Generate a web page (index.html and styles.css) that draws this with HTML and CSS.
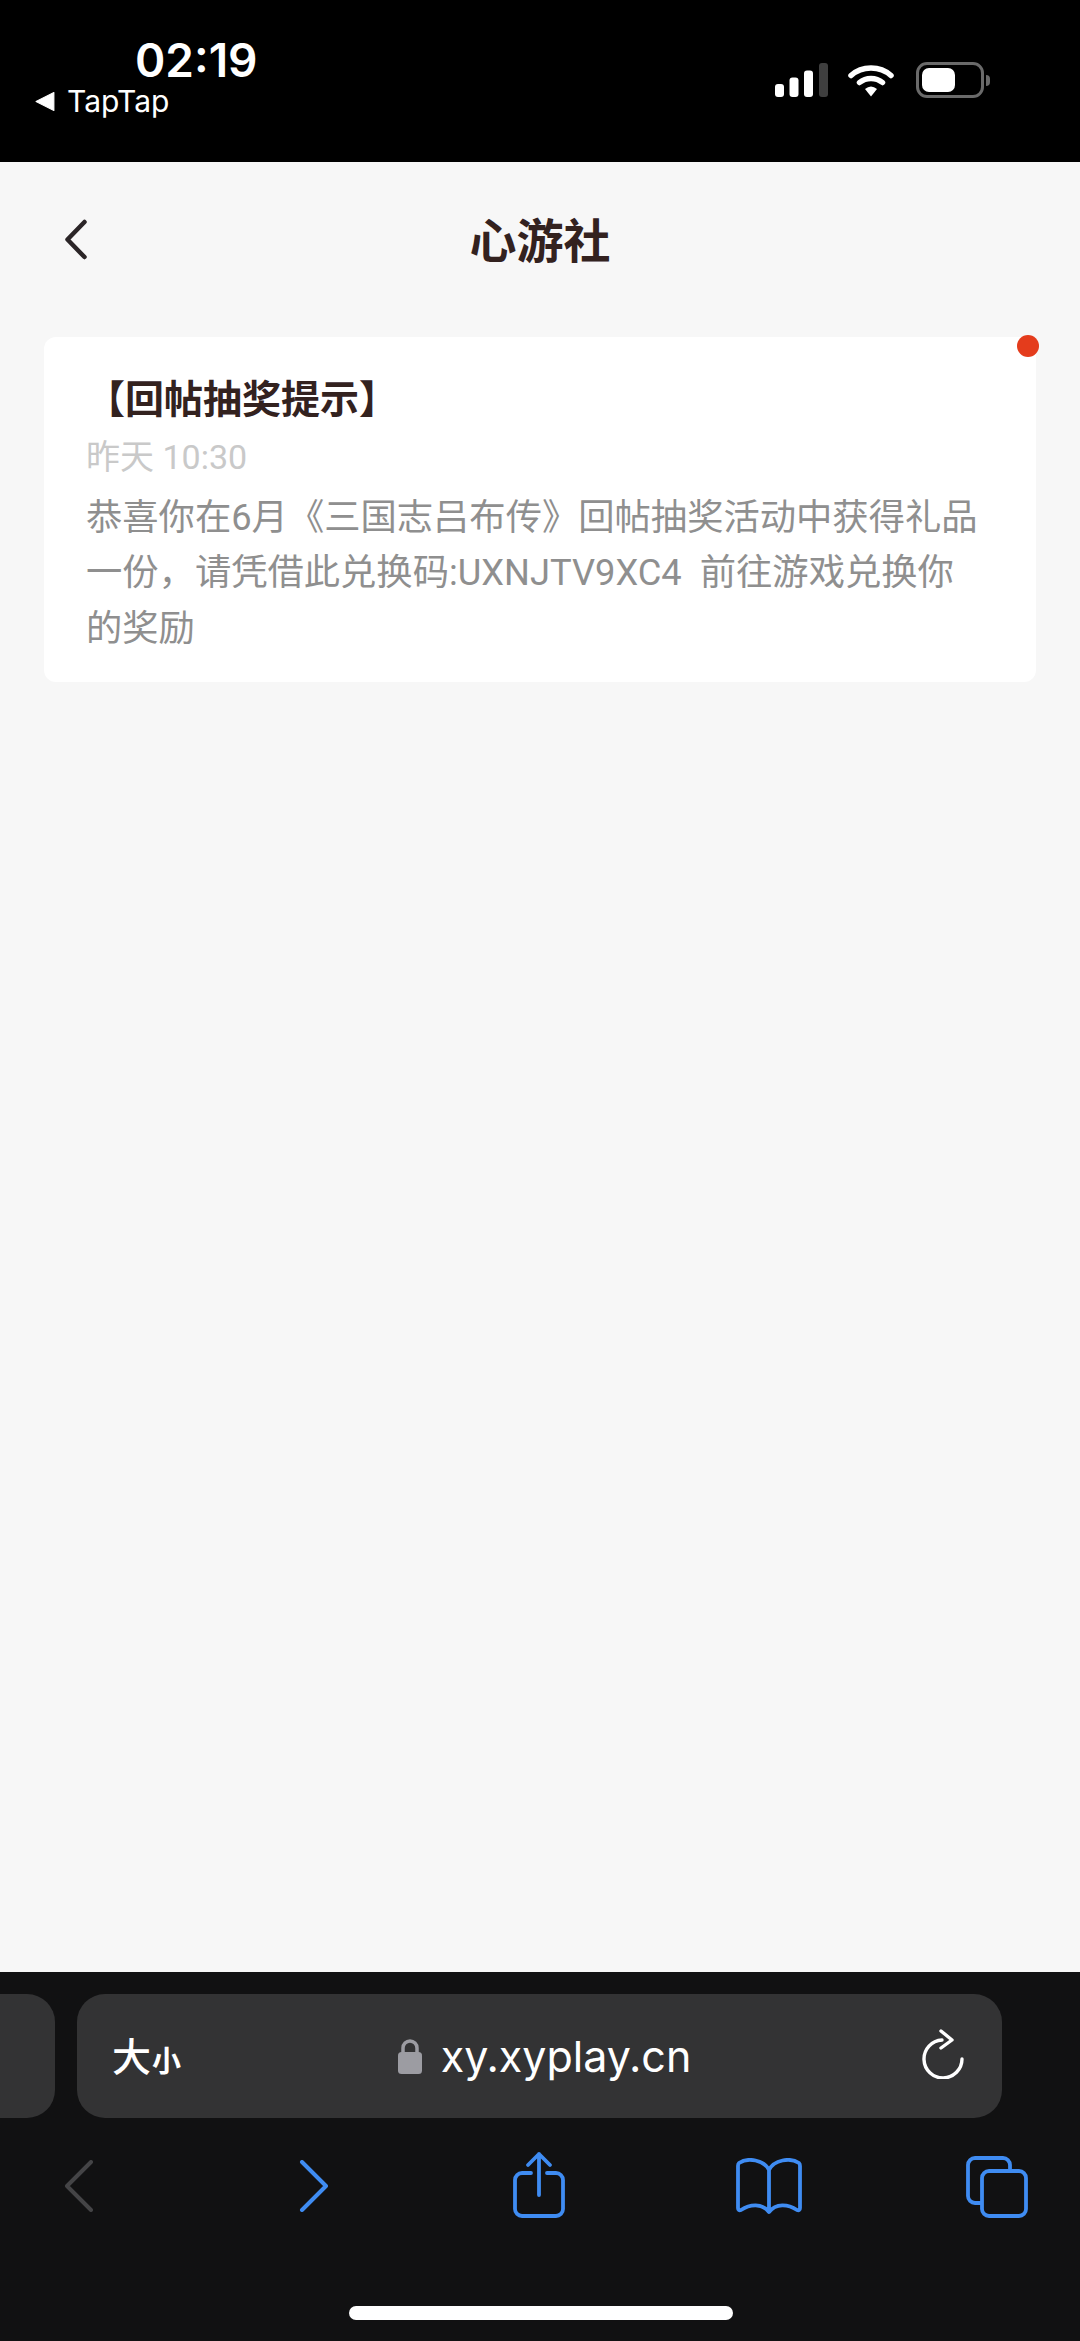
FILE: index.html
```html
<!DOCTYPE html>
<html lang="zh-CN">
<head>
<meta charset="utf-8">
<title>心游社</title>
<link rel="stylesheet" href="styles.css">
</head>
<body>
<div class="screen">
  <header class="status">
    <div class="status-left">
      <div class="clock">02:19</div>
      <div class="backapp"><svg class="tri" viewBox="0 0 20 20"><path d="M1 10 L18 1.500 V18.500 Z" fill="#fff" stroke="#fff" stroke-width="1" stroke-linejoin="round"/></svg><span>TapTap</span></div>
    </div>
    <div class="status-right">
      <svg class="sig" width="54" height="36" viewBox="0 0 54 36"><rect x="0" y="21" width="9" height="13" rx="3" fill="#fff"/><rect x="14.500" y="14.500" width="9" height="19.500" rx="3" fill="#fff"/><rect x="29" y="7.500" width="9" height="26.500" rx="3" fill="#fff"/><rect x="44" y="0" width="9" height="34" rx="3" fill="#3f3f3f"/></svg>
      <svg class="wifi" width="46" height="36" viewBox="0 0 46 36"><path d="M3 13.500 C14 3.500 32 3.500 43 13.500" fill="none" stroke="#fff" stroke-width="5.500" stroke-linecap="round" transform="translate(0 -1)"/><path d="M11.500 20.500 C18 15 28 15 34.500 20.500" fill="none" stroke="#fff" stroke-width="5.500" stroke-linecap="round" transform="translate(0 -1)"/><path d="M17 26 Q23 21 29 26 L23 33.500 Z" fill="#fff"/></svg>
      <div class="battery"><div class="batt-body"><div class="batt-fill"></div></div><div class="batt-tip"></div></div>
    </div>
  </header>
  <main class="page">
    <div class="nav">
      <svg class="nav-back" width="24" height="42" viewBox="0 0 24 42"><path d="M20.500 3 L3.500 20.500 L20.500 38" fill="none" stroke="#2b2527" stroke-width="4.500" stroke-linecap="round" stroke-linejoin="round"/></svg>
      <h1 class="nav-title">心游社</h1>
    </div>
    <article class="card">
      <span class="dot"></span>
      <h2 class="card-title">【回帖抽奖提示】</h2>
      <div class="card-time">昨天 10:30</div>
      <p class="card-body">恭喜你在6月《三国志吕布传》回帖抽奖活动中获得礼品<br>一份，请凭借此兑换码:UXNJTV9XC4&nbsp; 前往游戏兑换你<br>的奖励</p>
    </article>
  </main>
  <footer class="browser">
    <div class="tabs">
      <div class="tab-prev"></div>
      <div class="url">
        <div class="aa"><span class="aa-big">大</span><span class="aa-small">小</span></div>
        <div class="addr">
          <svg class="lock" width="26" height="36" viewBox="0 0 26 36"><path d="M6 16 V10 a7 7 0 0 1 14 0 V16" fill="none" stroke="#9c9ca2" stroke-width="3.500"/><rect x="1" y="14" width="24" height="22" rx="3.500" fill="#9c9ca2"/></svg>
          <span>xy.xyplay.cn</span>
        </div>
        <svg class="reload" width="42" height="50" viewBox="0 0 42 50"><path d="M20 11 A19 19 0 1 0 40 30" fill="none" stroke="#fff" stroke-width="3.400" stroke-linecap="round"/><path d="M19 2 L30 11 L19 19" fill="none" stroke="#fff" stroke-width="3.400" stroke-linecap="round" stroke-linejoin="round"/></svg>
      </div>
    </div>
    <nav class="toolbar">
      <svg class="tb-back" width="30" height="52" viewBox="0 0 30 52"><path d="M27 2 L3 26 L27 50" fill="none" stroke="#444446" stroke-width="4" stroke-linecap="round" stroke-linejoin="round"/></svg>
      <svg class="tb-fwd" width="30" height="52" viewBox="0 0 30 52"><path d="M3 2 L27 26 L3 50" fill="none" stroke="#3f8cf2" stroke-width="4" stroke-linecap="round" stroke-linejoin="round"/></svg>
      <svg class="tb-share" width="54" height="70" viewBox="0 0 54 70"><path d="M18 22 H9 a7 7 0 0 0 -7 7 V58 a7 7 0 0 0 7 7 H43 a7 7 0 0 0 7 -7 V29 a7 7 0 0 0 -7 -7 H34" fill="none" stroke="#3f8cf2" stroke-width="3.800" stroke-linecap="round"/><path d="M26 44 V3 M15 14 L26 3 L37 14" fill="none" stroke="#3f8cf2" stroke-width="3.800" stroke-linecap="round" stroke-linejoin="round"/></svg>
      <svg class="tb-book" width="66" height="56" viewBox="0 0 66 56"><path d="M33 12 C28 2 12 -1 3 5 Q2 6 2 8 V50 Q2 53 5 52 C14 46 26 45 33 54 C40 45 52 46 61 52 Q64 53 64 50 V8 Q64 6 63 5 C54 -1 38 2 33 12 Z M33 12 V54" fill="none" stroke="#3f8cf2" stroke-width="3.800" stroke-linejoin="round"/></svg>
      <svg class="tb-tabs" width="62" height="62" viewBox="0 0 62 62"><path d="M15 47 H9 a7 7 0 0 1 -7 -7 V9 a7 7 0 0 1 7 -7 H37 a7 7 0 0 1 7 7 V15" fill="none" stroke="#3f8cf2" stroke-width="3.800"/><rect x="16" y="15" width="44" height="45" rx="7" fill="none" stroke="#3f8cf2" stroke-width="3.800"/></svg>
    </nav>
    <div class="home-bar"></div>
  </footer>
</div>
</body>
</html>
```
FILE: styles.css
```css
* { box-sizing: border-box; margin: 0; padding: 0; }
html, body { width: 1080px; height: 2341px; overflow: hidden; background: #f7f7f7; }
body { font-family: "Noto Sans CJK SC", "Liberation Sans", sans-serif; }
.screen { width: 1080px; height: 2341px; display: flex; flex-direction: column; }

.status { height: 162px; background: #000; color: #fff; display: flex; justify-content: space-between; flex: none; }
.status-left { padding: 33px 0 0 35px; display: flex; flex-direction: column; }
.clock { font-family: Inter, "Liberation Sans", sans-serif; font-weight: 600; font-size: 46px; line-height: 54px; margin-left: 100px; }
.backapp { display: flex; align-items: center; gap: 11px; font-family: Inter, "Liberation Sans", sans-serif; font-size: 30px; line-height: 34px; margin-top: -3px; }
.tri { width: 21px; height: 21px; }
.status-right { display: flex; align-items: flex-start; padding: 62px 0 0 0; margin-right: 90px; }
.sig { margin-right: 19px; margin-top: 1px; }
.wifi { margin-right: 22px; margin-top: 1px; }
.battery { display: flex; align-items: center; height: 36px; }
.batt-body { width: 68px; height: 36px; border: 3px solid #6a6a6a; border-radius: 11px; padding: 3px; }
.batt-fill { width: 33px; height: 24px; background: #fff; border-radius: 7px; }
.batt-tip { width: 4px; height: 11px; background: #6a6a6a; border-radius: 0 6px 6px 0; margin-left: 2px; }

.page { flex: 1; background: #f7f7f7; padding: 0 44px; }
.nav { height: 175px; position: relative; display: flex; justify-content: center; align-items: center; }
.nav-back { position: absolute; left: 20px; top: 57px; }
.nav-title { font-size: 47px; font-weight: 700; color: #33221f; line-height: 60px; margin-top: -24px; }
.card { position: relative; width: 992px; height: 345px; background: #fff; border-radius: 12px; padding: 34px 0 0 42px; }
.dot { position: absolute; right: -3px; top: -2px; width: 22px; height: 22px; border-radius: 50%; background: #e43c1c; }
.card-title { font-size: 39px; font-weight: 700; color: #33221f; line-height: 50px; }
.card-time { font-size: 34px; color: #c9c9c9; line-height: 44px; margin-top: 14px; font-family: Roboto, "Noto Sans CJK SC", sans-serif; }
.card-body { font-size: 36.300px; color: #8f8f8f; line-height: 55.300px; margin-top: 11px; font-family: Roboto, "Noto Sans CJK SC", sans-serif; white-space: nowrap; }

.browser { height: 369px; flex: none; background: #111112; position: relative; padding-top: 22px; }
.tabs { display: flex; gap: 22px; height: 124px; margin-left: -70px; }
.tab-prev { width: 125px; height: 124px; background: #333334; border-radius: 28px; flex: none; }
.url { width: 925px; height: 124px; background: #333334; border-radius: 28px; position: relative; display: flex; align-items: center; justify-content: center; flex: none; }
.aa { position: absolute; left: 35px; top: 41px; display: flex; align-items: flex-end; color: #fff; line-height: 1; }
.aa-big { font-size: 39px; font-weight: 500; }
.aa-small { font-size: 29px; font-weight: 700; margin-left: 1px; }
.addr { display: flex; align-items: center; gap: 18px; font-family: Inter, "Liberation Sans", sans-serif; font-size: 43px; color: #fff; margin-left: 9px; }
.lock { margin-top: 0; }
.reload { position: absolute; right: 38px; top: 35px; }
.toolbar { position: absolute; left: 0; top: 0; width: 100%; height: 100%; }
.toolbar svg { position: absolute; }
.tb-back { left: 64px; top: 188px; }
.tb-fwd { left: 299px; top: 188px; }
.tb-share { left: 513px; top: 179px; }
.tb-book { left: 736px; top: 186px; }
.tb-tabs { left: 966px; top: 184px; }
.home-bar { position: absolute; left: 349px; top: 334px; width: 384px; height: 14px; border-radius: 7px; background: #fff; }
```
